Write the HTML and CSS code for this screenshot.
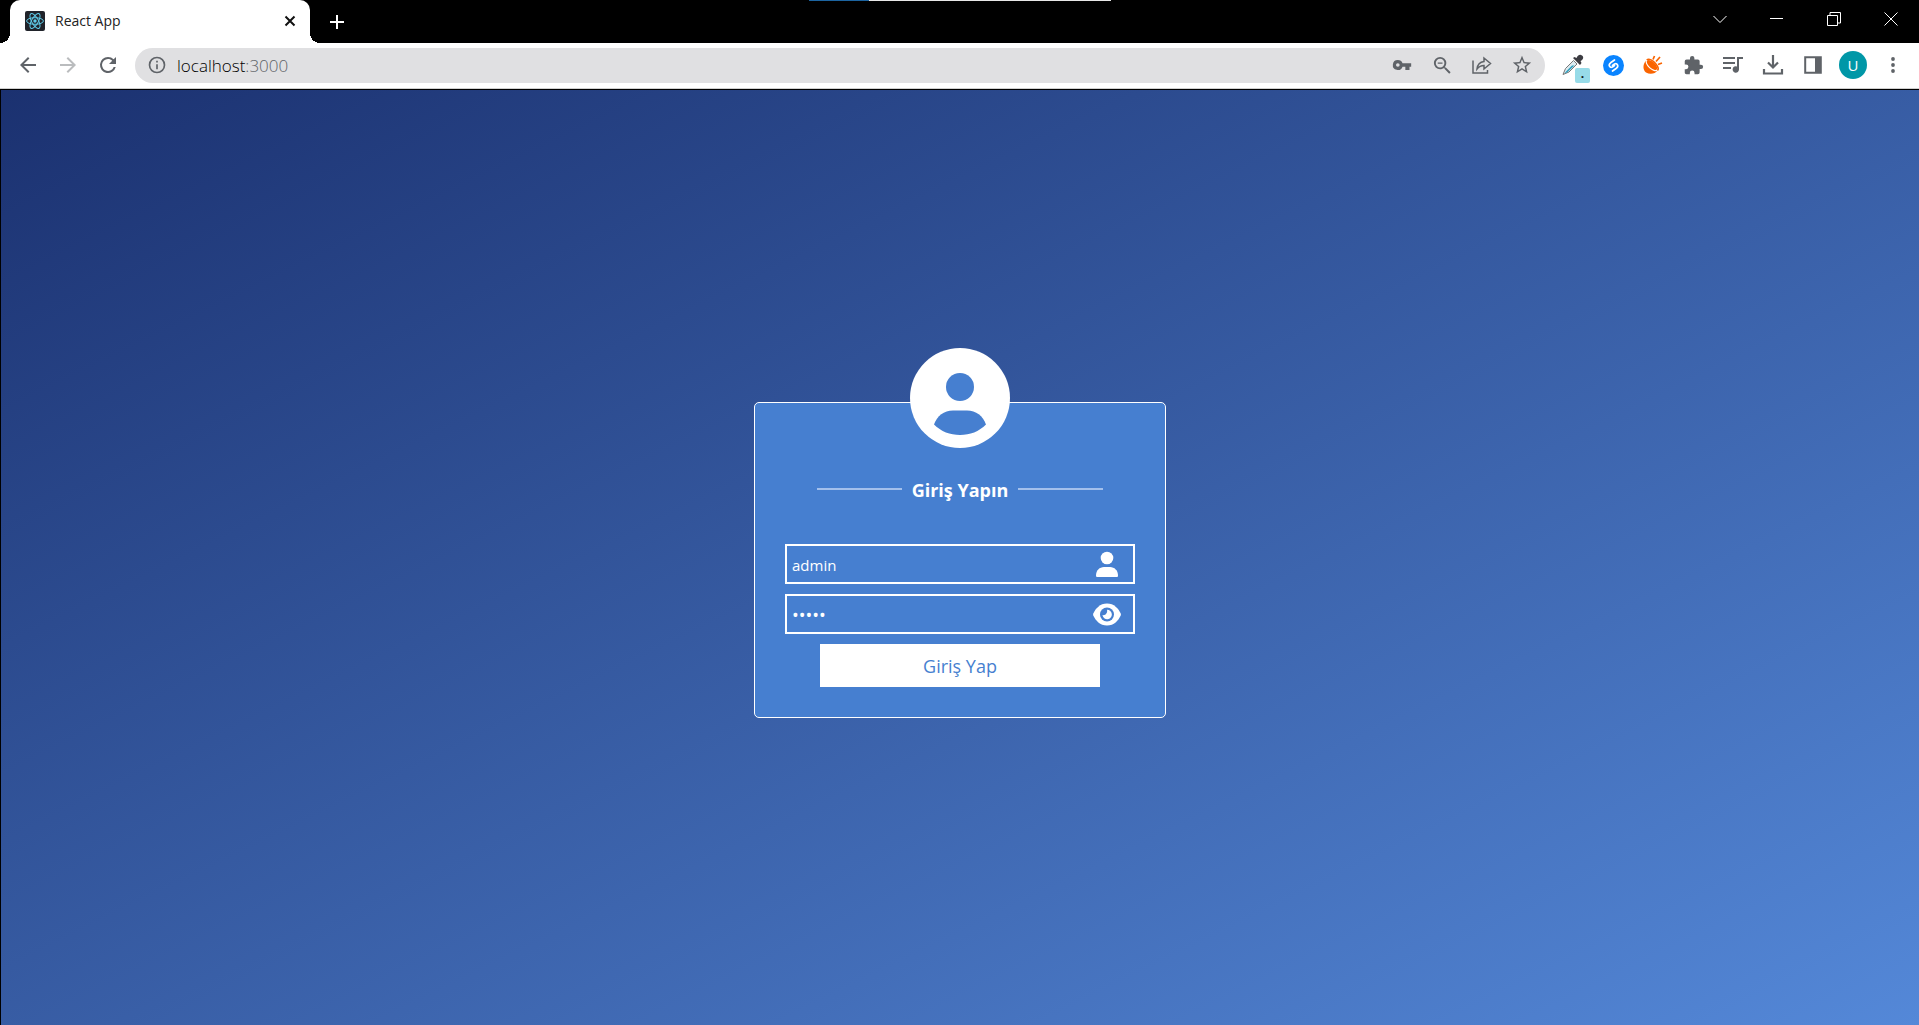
FILE: index.html
```html
<!DOCTYPE html>
<html lang="tr">
<head>
<meta charset="utf-8">
<meta name="viewport" content="width=device-width, initial-scale=1">
<title>React App</title>
<link rel="stylesheet" href="styles.css">
</head>
<body>
<header class="browser">
  <div class="progress"></div>
  <div class="tabstrip">
    <div class="tab">
      <svg class="favicon" viewBox="0 0 20 20" fill="none" stroke="#5ecbe8">
        <rect width="20" height="20" rx="2" fill="#20232a" stroke="none"/>
        <ellipse cx="10" cy="10" rx="8.4" ry="3.3"/>
        <ellipse cx="10" cy="10" rx="8.4" ry="3.3" transform="rotate(60 10 10)"/>
        <ellipse cx="10" cy="10" rx="8.4" ry="3.3" transform="rotate(120 10 10)"/>
        <circle cx="10" cy="10" r="1.7" fill="#5ecbe8" stroke="none"/>
      </svg>
      <span class="tab-title">React App</span>
      <button class="tab-close" aria-label="Close tab"><svg width="12" height="12" viewBox="0 0 12 12" stroke="#111" stroke-width="2"><path d="M1.500 1.500l9 9M10.500 1.500l-9 9"/></svg></button>
    </div>
    <button class="new-tab" aria-label="New tab"><svg width="16" height="16" viewBox="0 0 16 16" stroke="#fff" stroke-width="2"><path d="M8 1v14M1 8h14"/></svg></button>
    <div class="window-buttons">
      <button aria-label="Search tabs"><svg width="14" height="14" viewBox="0 0 14 14"><path d="M.5 4l6.500 6.500L13.500 4"/></svg></button>
      <button aria-label="Minimize"><svg width="14" height="14" viewBox="0 0 14 14"><path d="M0 6.500h13"/></svg></button>
      <button aria-label="Restore"><svg width="14" height="14" viewBox="0 0 14 14"><path d="M.5 3.500h10v10H.5zM3 3.500v-3h10.500v10.500h-3"/></svg></button>
      <button aria-label="Close"><svg width="14" height="14" viewBox="0 0 14 14"><path d="M.5.5l13 13M13.500.5l-13 13"/></svg></button>
    </div>
  </div>
  <div class="toolbar">
    <nav class="nav-buttons" aria-label="Navigation">
      <button aria-label="Back"><svg width="24" height="24" viewBox="0 0 24 24" fill="#5f6368"><path d="M20 11H7.830l5.590-5.590L12 4l-8 8 8 8 1.410-1.410L7.830 13H20z"/></svg></button>
      <button aria-label="Forward"><svg width="24" height="24" viewBox="0 0 24 24" fill="#babcbe"><path d="M12 4l-1.410 1.410L16.170 11H4v2h12.170l-5.580 5.590L12 20l8-8z"/></svg></button>
      <button aria-label="Reload"><svg width="24" height="24" viewBox="0 0 24 24" fill="#5f6368"><path d="M17.650 6.350A7.960 7.960 0 0 0 12 4a8 8 0 1 0 7.730 10h-2.080A6 6 0 1 1 12 6c1.660 0 3.140.69 4.220 1.780L13 11h7V4z"/></svg></button>
    </nav>
    <div class="omnibox">
      <svg width="20" height="20" viewBox="0 0 24 24" fill="#5f6368"><path d="M11 17h2v-6h-2zM11 9h2V7h-2zM12 2a10 10 0 1 0 0 20 10 10 0 0 0 0-20zm0 18a8 8 0 1 1 0-16 8 8 0 0 1 0 16z"/></svg>
      <span class="url">localhost<span class="port">:3000</span></span>
      <div class="page-actions">
        <button aria-label="Passwords"><svg width="20" height="20" viewBox="0 0 24 24" fill="#5f6368"><path d="M12.650 10A5.990 5.990 0 0 0 7 6a6 6 0 1 0 5.650 8H16v4h5v-4h2v-4zM7 14.200a2.200 2.200 0 1 1 0-4.400 2.200 2.200 0 0 1 0 4.400z"/></svg></button>
        <button aria-label="Zoom"><svg width="23" height="23" viewBox="0 0 24 24" fill="#5f6368"><path d="M15.500 14h-.79l-.28-.27A6.470 6.470 0 0 0 16 9.500 6.500 6.500 0 1 0 9.500 16c1.610 0 3.090-.59 4.230-1.570l.27.28v.79l5 4.990L20.490 19zm-6 0a4.500 4.500 0 1 1 0-9 4.500 4.500 0 0 1 0 9zM7 8.800h5v1.300H7z"/></svg></button>
        <button aria-label="Share"><svg width="20" height="20" viewBox="0 0 20 20" fill="none" stroke="#5f6368" stroke-width="1.500"><path d="M1 5.500V18h14.500v-3M5 14c.5-4.500 3-7 7-7.500V3l6.500 5.500L12 14v-3.500c-3 0-5 1-7 3.500z"/></svg></button>
        <button aria-label="Bookmark"><svg width="22" height="22" viewBox="0 0 24 24" fill="#5f6368"><path d="M22 9.240l-7.190-.62L12 2 9.190 8.630 2 9.240l5.460 4.730L5.820 21 12 17.270 18.180 21l-1.630-7.030zM12 15.400l-3.760 2.270 1-4.280-3.320-2.880 4.380-.38L12 6.100l1.710 4.040 4.380.38-3.320 2.880 1 4.280z"/></svg></button>
      </div>
    </div>
    <div class="extensions">
      <button class="picker" aria-label="Colour picker"><svg width="22" height="22" viewBox="0 0 22 22"><path d="M11.500 6.500L3.500 14.500 1 20.500l6-2.500 8-8z" fill="#dcebf1" stroke="#777" stroke-width="1"/><path d="M10 11.500l-6 6-1.500 2 2.500-.9 7.500-7.100z" fill="#2e9fbe"/><path d="M11 4l1.500-1 2 1C16 1 18 0 20 1.500s1.500 4-1.500 5.500l1 2-1.500 2z" fill="#3c3c42"/></svg><span class="badge">.</span></button>
      <button aria-label="Shazam"><svg width="21" height="21" viewBox="0 0 21 21" fill="none"><circle cx="10.500" cy="10.500" r="10.500" fill="#0a84ff"/><path d="M11.500 5L7.600 7.800c-2.800 2.200-.8 5.400 1.900 4.200l2-1.500M9.500 16l3.900-2.800c2.800-2.200.8-5.400-1.900-4.200l-2 1.500" stroke="#fff" stroke-width="1.700" stroke-linecap="round"/></svg></button>
      <button aria-label="Coconut"><svg width="20" height="20" viewBox="0 0 20 20"><path d="M3.500 5C-.5 9-.5 15 3 17.500c4 2.500 9.500 1.500 11.500-2.500z" fill="#fa6400"/><ellipse cx="9" cy="10" rx="7.200" ry="3.600" transform="rotate(43 9 10)" fill="#fa6400" stroke="#fff" stroke-width="1.200"/><path d="M3.700 5C6 3 10 5.500 12.500 8.500s3.500 5.500 2 7" fill="none" stroke="#fa6400" stroke-width="1.600"/><path d="M10 4.500L11.500 1M13 6.500L17 2M15 9.500l4-1.500" stroke="#fa6400" stroke-width="1.700"/></svg></button>
      <button aria-label="Extensions"><svg width="21" height="21" viewBox="0 0 24 24" fill="#5f6368"><path d="M20.500 11H19V7a2 2 0 0 0-2-2h-4V3.500a2.500 2.500 0 0 0-5 0V5H4a2 2 0 0 0-2 2v3.800h1.500a2.700 2.700 0 0 1 0 5.400H2V20c0 1.100.9 2 2 2h3.800v-1.500a2.700 2.700 0 0 1 5.400 0V22H17a2 2 0 0 0 2-2v-4h1.500a2.500 2.500 0 0 0 0-5z"/></svg></button>
      <button aria-label="Media"><svg width="22" height="22" viewBox="0 0 22 22" fill="#5f6368"><path d="M1 3h12v2H1zM1 8h12v2H1zM1 13h8v2H1zM15 3h6v2h-4v10.500a3.200 3.200 0 1 1-2-3z"/></svg></button>
      <button aria-label="Downloads"><svg width="22" height="22" viewBox="0 0 22 22" fill="none" stroke="#5f6368" stroke-width="2.200"><path d="M11 1v12M6 8.500l5 5 5-5M2 15v4.500h18V15"/></svg></button>
      <button aria-label="Side panel"><svg width="18" height="18" viewBox="0 0 18 18"><path d="M1.200 1.200h15.600v15.600H1.200z" fill="none" stroke="#5f6368" stroke-width="2"/><path d="M11 1h6v16h-6z" fill="#5f6368"/></svg></button>
      <button class="profile" aria-label="Profile">U</button>
      <button aria-label="Menu"><svg width="18" height="18" viewBox="0 0 18 18" fill="#5f6368"><circle cx="9" cy="3" r="1.900"/><circle cx="9" cy="9" r="1.900"/><circle cx="9" cy="15" r="1.900"/></svg></button>
    </div>
  </div>
</header>
<main class="page">
  <form class="card">
    <svg class="avatar" viewBox="0 0 100 100"><circle cx="50" cy="50" r="50" fill="#fff"/><circle cx="50" cy="39" r="14" fill="#467fd0"/><path d="M24 76.500C27 68 34 62.500 43 62.500h14c9 0 16 5.500 19 14-7 7-16 10.500-26 10.500s-19-3.500-26-10.500z" fill="#467fd0"/></svg>
    <h1 class="heading"><span>Giriş Yapın</span></h1>
    <div class="field">
      <input type="text" value="admin" aria-label="Kullanıcı adı">
      <svg width="28" height="28" viewBox="0 0 28 28" fill="#fff"><circle cx="14" cy="8" r="6.300"/><path d="M3 25.500c0-5 3.500-8.500 8-8.500h6c4.500 0 8 3.500 8 8.500 0 1-.5 1.500-1.500 1.500h-19C3.500 27 3 26.500 3 25.500z"/></svg>
    </div>
    <div class="field">
      <input type="password" value="admin" aria-label="Şifre">
      <svg width="28" height="28" viewBox="0 0 28 28" fill="#fff"><path d="M14 3.500C7 3.500 2.500 8.500.3 13.500c-.3.700-.3 1.300 0 2C2.500 20.500 7 25.500 14 25.500s11.500-5 13.700-10c.3-.7.3-1.300 0-2C25.500 8.500 21 3.500 14 3.500z"/><circle cx="14" cy="14.500" r="7" fill="#467fd0"/><path d="M14 9.800a4.700 4.700 0 1 1-4.500 5.300c2.700.8 5.300-1.800 4.500-5.300z"/></svg>
    </div>
    <button class="submit" type="submit">Giriş Yap</button>
  </form>
</main>
</body>
</html>
```
FILE: styles.css
```css
* {
  box-sizing: border-box;
}

body {
  margin: 0;
  min-height: 100vh;
  display: flex;
  flex-direction: column;
  font-family: "Open Sans", "Noto Sans", sans-serif;
}

button {
  display: flex;
  align-items: center;
  justify-content: center;
  padding: 0;
  border: 0;
  background: none;
  font: inherit;
}

svg {
  display: block;
  flex-shrink: 0;
}

/* Browser frame */
.browser {
  position: relative;
  background: #fff;
  border-bottom: 1px solid #000;
}

.progress {
  position: absolute;
  top: 0;
  left: 0;
  right: 0;
  width: 302px;
  height: 1px;
  margin: 0 auto;
  background: linear-gradient(to right, #1c64a0 60px, #e8e8e8 60px);
}

.tabstrip {
  display: flex;
  align-items: center;
  height: 43px;
  padding-left: 10px;
  background: #000;
}

.tab {
  position: relative;
  display: flex;
  align-items: center;
  width: 300px;
  height: 43px;
  padding: 0 12px 2px 15px;
  border-radius: 10px 10px 0 0;
  background: #fff;
}

.tab::before,
.tab::after {
  content: "";
  position: absolute;
  bottom: 0;
  width: 10px;
  height: 10px;
}

.tab::before {
  right: 100%;
  background: radial-gradient(circle at 0 0, #000 10px, #fff 10px);
}

.tab::after {
  left: 100%;
  background: radial-gradient(circle at 100% 0, #000 10px, #fff 10px);
}

.favicon {
  width: 20px;
  height: 20px;
}

.tab-title {
  flex: 1;
  padding-left: 10px;
  font-size: 14px;
  color: #222;
}

.tab-close {
  width: 16px;
  height: 16px;
}

.new-tab {
  width: 34px;
  height: 34px;
  margin-left: 10px;
}

.window-buttons {
  display: flex;
  align-self: stretch;
  height: 38px;
  margin-left: auto;
}

.window-buttons button {
  width: 57px;
}

.window-buttons path {
  fill: none;
  stroke: #fff;
  stroke-width: 1;
}

.toolbar {
  display: flex;
  align-items: center;
  height: 46px;
  padding: 0 6px 1px 8px;
  border-bottom: 1px solid #d0d0d0;
}

.nav-buttons {
  display: flex;
}

.nav-buttons button {
  width: 40px;
  height: 36px;
}

.omnibox {
  flex: 1;
  display: flex;
  align-items: center;
  height: 35px;
  margin: 0 8px 0 7px;
  padding: 0 3px 0 12px;
  border-radius: 18px;
  background: #e0e0e2;
}

.url {
  padding-left: 10px;
  font-size: 17px;
  font-weight: 300;
  color: #000;
}

.port {
  color: #5f6368;
}

.page-actions {
  display: flex;
  margin-left: auto;
}

.page-actions button,
.extensions button {
  width: 40px;
  height: 36px;
}

.extensions {
  display: flex;
  align-items: center;
}

.picker {
  position: relative;
}

.badge {
  position: absolute;
  left: 22px;
  bottom: 0;
  width: 15px;
  height: 15px;
  border-radius: 2px;
  background: #97dbe8;
  font-size: 12px;
  font-weight: 700;
  line-height: 12px;
  color: #111;
}

.extensions .profile {
  width: 28px;
  height: 28px;
  margin: 0 6px;
  border-radius: 50%;
  background: #0097a7;
  font-size: 15px;
  color: #fff;
}

/* Login page */
.page {
  flex: 1;
  display: flex;
  align-items: center;
  justify-content: center;
  padding: 60px 16px 56px;
  border-left: 1px solid #000;
  background: linear-gradient(to bottom right, #1b3170, #5488d8);
}

.card {
  display: flex;
  flex-direction: column;
  align-items: center;
  gap: 10px;
  width: 412px;
  padding: 0 30px 30px;
  border: 1px solid #fff;
  border-radius: 5px;
  background: #467fd0;
}

.avatar {
  width: 100px;
  height: 100px;
  margin-top: -55px;
}

.heading {
  display: flex;
  align-items: center;
  gap: 10px;
  margin: 16px 0 30px;
  font-size: 18px;
  font-weight: 700;
  line-height: 28px;
  color: #fff;
}

.heading span {
  padding-top: 2px;
}

.heading::before,
.heading::after {
  content: "";
  width: 85px;
  height: 2px;
  background: #a3c0ec;
}

.field {
  display: flex;
  align-items: center;
  width: 100%;
  height: 40px;
  padding: 0 12px 0 5px;
  border: 2px solid #fff;
}

.field input {
  flex: 1;
  min-width: 0;
  padding: 2px 0 0;
  border: 0;
  outline: 0;
  background: none;
  font: inherit;
  font-size: 15px;
  color: #fff;
}

.field input[type="password"] {
  font-size: 18px;
}

.submit {
  width: 80%;
  height: 43px;
  padding-top: 2px;
  background: #fff;
  font-size: 18px;
  color: #467fd0;
}
```
